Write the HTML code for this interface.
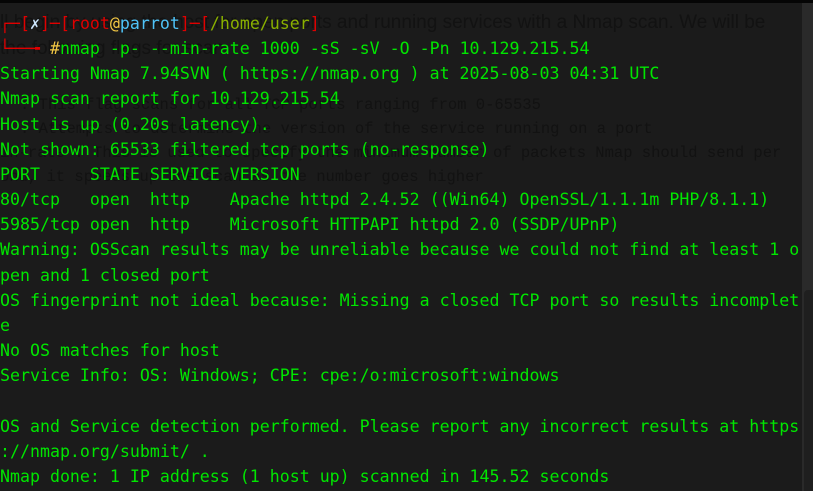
<!DOCTYPE html>
<html><head><meta charset="utf-8"><style>
html,body{margin:0;padding:0;}
body{width:813px;height:491px;background:#1b1b1b;overflow:hidden;position:relative;}
.top{position:absolute;left:0;top:0;width:813px;height:3px;background:#050505;}
.sb{position:absolute;left:802px;top:3px;width:11px;height:488px;background:#2a2a2a;}
.thumb{position:absolute;left:804px;top:290px;width:9px;height:201px;background:#1f1f1f;border-radius:4px 0 0 0;}
.gw{position:absolute;left:0;top:0;width:800px;height:491px;overflow:hidden;}
.ghost{position:absolute;color:#121212;white-space:pre;}
.g1{font-family:"Liberation Sans",sans-serif;font-size:19px;}
.g2{font-family:"Liberation Mono",monospace;font-size:15.5px;}
pre{position:absolute;left:0;top:11px;margin:0;font-family:"DejaVu Sans Mono","Liberation Mono",monospace;font-size:16.6px;line-height:25.15px;color:#00e600;white-space:pre;}
.r{color:#e00000}.w{color:#cfe8ff}.y{color:#f2c744}.c{color:#4fc3f7}.o{color:#8ab000}
</style></head><body>
<div class="top"></div>
<div class="gw">
<div class="ghost g1" style="left:0;top:12px">ll begin by using the host for open ports and running services with a Nmap scan. We will be</div>
<div class="ghost g1" style="left:0;top:38px">the following flags for scan</div>
<div class="ghost g2" style="left:20px;top:96px">: This flag scans for all TCP ports ranging from 0-65535</div>
<div class="ghost g2" style="left:20px;top:120px">: Attempts to determine the version of the service running on a port</div>
<div class="ghost g2" style="left:0;top:144px">in-rate : This is used to specify the minimum number of packets Nmap should send per</div>
<div class="ghost g2" style="left:0;top:168px">ond, it speeds up the scan as the number goes higher</div>
</div>
<pre><span class="r">┌─[</span><span class="w">✗</span><span class="r">]─[root</span><span class="y">@</span><span class="c">parrot</span><span class="r">]─[</span><span class="o">/home/user</span><span class="r">]</span>
<span class="r">└──╼ </span><span class="y">#</span>nmap -p- --min-rate 1000 -sS -sV -O -Pn 10.129.215.54
Starting Nmap 7.94SVN ( https://nmap.org ) at 2025-08-03 04:31 UTC
Nmap scan report for 10.129.215.54
Host is up (0.20s latency).
Not shown: 65533 filtered tcp ports (no-response)
PORT     STATE SERVICE VERSION
80/tcp   open  http    Apache httpd 2.4.52 ((Win64) OpenSSL/1.1.1m PHP/8.1.1)
5985/tcp open  http    Microsoft HTTPAPI httpd 2.0 (SSDP/UPnP)
Warning: OSScan results may be unreliable because we could not find at least 1 o
pen and 1 closed port
OS fingerprint not ideal because: Missing a closed TCP port so results incomplet
e
No OS matches for host
Service Info: OS: Windows; CPE: cpe:/o:microsoft:windows

OS and Service detection performed. Please report any incorrect results at https
://nmap.org/submit/ .
Nmap done: 1 IP address (1 host up) scanned in 145.52 seconds</pre>
<div class="sb"></div>
<div class="thumb"></div>
</body></html>
